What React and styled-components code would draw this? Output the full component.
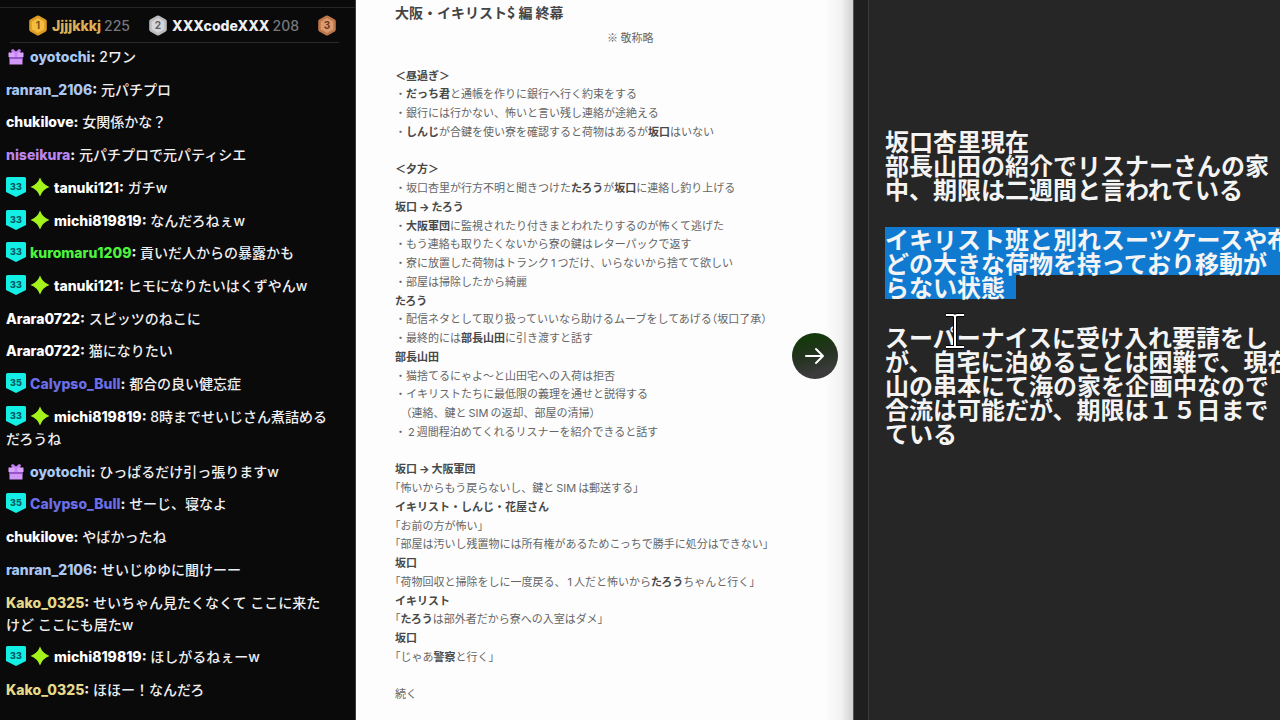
import styled, {createGlobalStyle} from 'styled-components';

const GlobalStyle = createGlobalStyle`
  *, *::before, *::after {
    box-sizing: border-box;
  }

  html, body {
    height: 100%;
    margin: 0;
    padding: 0;
    overflow: hidden;
    background-color: #262626;
  }

  p, h1, ul {
    margin: 0;
    padding: 0;
  }
`;

const Screen = styled.div`
  display: grid;
  grid-template-columns: 356fr 497fr 427fr;
  grid-template-rows: minmax(0, 1fr);
  height: 100vh;
`;

/* chat */

const Chat = styled.section`
  display: flex;
  flex-direction: column;
  min-width: 0;
  padding-top: 7px;
  border-right: 1px solid #3c3c3e;
  background-color: #0a0a0b;
  color: #efeff1;
  font-family: 'Inter', 'Noto Sans CJK JP', sans-serif;
  font-size: 14px;
  line-height: 22px;
`;

const Leaderboard = styled.ul`
  display: flex;
  align-items: center;
  gap: 18px;
  height: 36px;
  padding-left: 28px;
  border-top: 1px solid #26262a;
  list-style: none;
`;

const Leader = styled.li`
  display: flex;
  align-items: center;
  gap: 4px;
  color: ${({$color}) => $color};
  font-weight: 800;
`;

const Score = styled.span`
  color: #77777c;
  font-weight: 500;
`;

const Divider = styled.hr`
  flex: none;
  width: auto;
  height: 1px;
  margin: -1px 16px 0 10px;
  border: 0;
  background-color: #2a2a2d;
`;

const Messages = styled.ul`
  flex: 1;
  display: flex;
  flex-direction: column;
  justify-content: space-between;
  padding: 3px 24px 19px 6px;
  list-style: none;
`;

const Message = styled.li`
  font-weight: 500;

  svg {
    vertical-align: -4px;
    margin-right: 4px;
  }
`;

const Name = styled.span`
  color: ${({$color}) => $color};
  font-weight: 800;
`;

const Colon = styled.span`
  font-weight: 800;
`;

/* document */

const Page = styled.article`
  position: relative;
  display: flex;
  flex-direction: column;
  min-width: 0;
  padding: 0 0 17px 39px;
  background: linear-gradient(to left, #d2d2d2, #f2f2f2 12px, #fdfdfd 28px, #fdfdfd);
  color: #666666;
  font-family: 'Noto Sans CJK JP', sans-serif;
  font-size: 11px;
  white-space: pre;
  text-spacing-trim: trim-start;
`;

const Title = styled.h1`
  height: 28px;
  color: #444444;
  font-size: 14px;
  font-weight: 700;
  line-height: 25px;
`;

const Lines = styled.div`
  flex: 1;
  display: grid;
  grid-auto-rows: minmax(0, 1fr);
  line-height: 18px;

  b {
    color: #484848;
    font-weight: 700;
  }
`;

const Line = styled.p`
  color: ${({$head}) => ($head ? '#484848' : 'inherit')};
  font-weight: ${({$head}) => ($head ? 700 : 400)};
`;

const Note = styled.p`
  padding-left: 212px;
`;

const Half = styled.span`
  font-feature-settings: 'halt';
`;

const Latin = styled.span`
  padding: 0 2px;
  font-family: 'Inter', sans-serif;
  line-height: 1;
`;

const NextButton = styled.button`
  position: absolute;
  top: 50%;
  right: 15px;
  display: flex;
  align-items: center;
  justify-content: center;
  width: 46px;
  height: 46px;
  margin-top: -27px;
  padding: 0;
  border: 0;
  border-radius: 50%;
  background: linear-gradient(165deg, #16380d 20%, #263322 50%, #3b3b3b 80%);
`;

/* memo */

const Memo = styled.section`
  display: flex;
  min-width: 0;
  overflow: hidden;
  background-color: #262626;
`;

const Gutter = styled.div`
  flex: none;
  width: 16px;
  border-left: 1px solid #555555;
  border-right: 1px solid #3a3a3a;
  background-color: #1f1f1f;
`;

const MemoBody = styled.div`
  position: relative;
  display: flex;
  flex-direction: column;
  gap: 26px;
  min-width: 0;
  padding: 129px 0 0 16px;
  color: #f4f4f4;
  font-family: 'Noto Sans CJK JP', sans-serif;
  font-size: 24px;
  font-weight: 700;
  line-height: 24px;
  white-space: pre;
`;

const Selected = styled.mark`
  display: block;
  width: ${({$short}) => ($short ? '131px' : 'auto')};
  background-color: #0f7ad0;
  color: inherit;
`;

const Caret = styled.svg`
  position: absolute;
  top: 312px;
  left: 76px;
`;

function Medal({place, fill, edge, ink}) {
  return (
    <svg width="20" height="21" viewBox="0 0 19 21">
      <path
        d="M8.3.8a2.4 2.4 0 0 1 2.4 0l6.6 3.8a2 2 0 0 1 1 1.8v8.2a2 2 0 0 1-1 1.8l-6.6 3.8a2.4 2.4 0 0 1-2.4 0l-6.6-3.8a2 2 0 0 1-1-1.8V6.400a2 2 0 0 1 1-1.800z"
        fill={edge}
      />
      <path d="M9.500 3l6.300 3.700v7.600L9.500 18l-6.300-3.700V6.700z" fill={fill} />
      <text x="9.500" y="14" textAnchor="middle" fontSize="10" fontWeight="700" fill={ink}>
        {place}
      </text>
    </svg>
  );
}

function Gift() {
  return (
    <svg width="20" height="18" viewBox="0 0 20 18">
      <path d="M5 2l2-1 3 2.500L13 1l2 1-1 3H6z" fill="#c07cf0" />
      <path d="M2.500 4.500h15V9h-15z" fill="#d9a2fb" />
      <path d="M3.500 9h13v7.500h-13z" fill="#d096f8" />
      <path d="M3.500 9h13v2h-13z" fill="#9455c8" />
      <path d="M8.500 4.500h3V9h-3z" fill="#c585f2" />
    </svg>
  );
}

function Level({value}) {
  return (
    <svg width="20" height="20" viewBox="0 0 20 20">
      <path d="M1.500 0h17A1.500 1.500 0 0 1 20 1.500V15l-10 5L0 15V1.500A1.500 1.500 0 0 1 1.500 0z" fill="#14efe6" />
      <text x="10" y="12.500" textAnchor="middle" fontSize="9" fontWeight="800" fill="#075a5c">
        {value}
      </text>
    </svg>
  );
}

function Spark() {
  return (
    <svg width="20" height="20" viewBox="0 0 20 20">
      <path d="M10 .5Q12.500 7.500 19.500 10Q12.500 12.500 10 19.500Q7.500 12.500 .5 10Q7.500 7.500 10 .5z" fill="#a4f41c" />
    </svg>
  );
}

const WHITE = '#ffffff';
const BLUE = '#a9c8f5';
const INDIGO = '#6b6ee6';
const YELLOW = '#e6d98a';

const messages = [
  {gift: true, name: 'oyotochi', color: BLUE, text: '2ワン'},
  {name: 'ranran_2106', color: BLUE, text: '元パチプロ'},
  {name: 'chukilove', color: WHITE, text: '女関係かな？'},
  {name: 'niseikura', color: '#bb86ee', text: '元パチプロで元パティシエ'},
  {level: 33, spark: true, name: 'tanuki121', color: WHITE, text: 'ガチw'},
  {level: 33, spark: true, name: 'michi819819', color: WHITE, text: 'なんだろねぇw'},
  {level: 33, name: 'kuromaru1209', color: '#4cf53c', text: '貢いだ人からの暴露かも'},
  {level: 33, spark: true, name: 'tanuki121', color: WHITE, text: 'ヒモになりたいはくずやんw'},
  {name: 'Arara0722', color: WHITE, text: 'スピッツのねこに'},
  {name: 'Arara0722', color: WHITE, text: '猫になりたい'},
  {level: 35, name: 'Calypso_Bull', color: INDIGO, text: '都合の良い健忘症'},
  {level: 33, spark: true, name: 'michi819819', color: WHITE, text: '8時までせいじさん煮詰めるだろうね'},
  {gift: true, name: 'oyotochi', color: BLUE, text: 'ひっぱるだけ引っ張りますw'},
  {level: 35, name: 'Calypso_Bull', color: INDIGO, text: 'せーじ、寝なよ'},
  {name: 'chukilove', color: WHITE, text: 'やばかったね'},
  {name: 'ranran_2106', color: BLUE, text: 'せいじゆゆに聞けーー'},
  {name: 'Kako_0325', color: YELLOW, text: 'せいちゃん見たくなくて ここに来たけど ここにも居たw'},
  {level: 33, spark: true, name: 'michi819819', color: WHITE, text: 'ほしがるねぇーw'},
  {name: 'Kako_0325', color: YELLOW, text: 'ほほー！なんだろ'},
];

function App() {
  return (
    <>
      <GlobalStyle />
      <Screen>
        <Chat>
          <Leaderboard>
            <Leader $color="#dfae55">
              <Medal place={1} fill="#f4bd3f" edge="#dc9a24" ink="#7c5210" />
              <span>
                Jjjjkkkj <Score>225</Score>
              </span>
            </Leader>
            <Leader $color="#efeff1">
              <Medal place={2} fill="#d6d6d8" edge="#bcbcc0" ink="#626266" />
              <span>
                XXXcodeXXX <Score>208</Score>
              </span>
            </Leader>
            <Leader $color="#d08a5c">
              <Medal place={3} fill="#dc9a70" edge="#bd7748" ink="#6b3a1c" />
            </Leader>
          </Leaderboard>
          <Divider />
          <Messages>
            {messages.map((m, i) => (
              <Message key={i}>
                {m.gift && <Gift />}
                {m.level && <Level value={m.level} />}
                {m.spark && <Spark />}
                <Name $color={m.color}>{m.name}</Name>
                <Colon>:</Colon> {m.text}
              </Message>
            ))}
          </Messages>
        </Chat>

        <Page>
          <Title>大阪・イキリスト$ 編 終幕</Title>
          <Lines>
            <Note>※ 敬称略</Note>
            <Line />
            <Line $head>＜昼過ぎ＞</Line>
            <Line>・<b>だっち君</b>と通帳を作りに銀行へ行く約束をする</Line>
            <Line>・銀行には行かない、怖いと言い残し連絡が途絶える</Line>
            <Line>・<b>しんじ</b>が合鍵を使い寮を確認すると荷物はあるが<b>坂口</b>はいない</Line>
            <Line />
            <Line $head>＜夕方＞</Line>
            <Line>・坂口杏里が行方不明と聞きつけた<b>たろう</b>が<b>坂口</b>に連絡し釣り上げる</Line>
            <Line $head>坂口<Latin>→</Latin>たろう</Line>
            <Line>・<b>大阪軍団</b>に監視されたり付きまとわれたりするのが怖くて逃げた</Line>
            <Line>・もう連絡も取りたくないから寮の鍵はレターパックで返す</Line>
            <Line>・寮に放置した荷物はトランク<Latin>1</Latin>つだけ、いらないから捨てて欲しい</Line>
            <Line>・部屋は掃除したから綺麗</Line>
            <Line $head>たろう</Line>
            <Line>・配信ネタとして取り扱っていいなら助けるムーブをしてあげる<Half>（</Half>坂口了承）</Line>
            <Line>・最終的には<b>部長山田</b>に引き渡すと話す</Line>
            <Line $head>部長山田</Line>
            <Line>・猫捨てるにゃよ〜と山田宅への入荷は拒否</Line>
            <Line>・イキリストたちに最低限の義理を通せと説得する</Line>
            <Line>　<Half>（</Half>連絡、鍵と<Latin>SIM</Latin>の返却、部屋の清掃）</Line>
            <Line>・<Latin>2</Latin>週間程泊めてくれるリスナーを紹介できると話す</Line>
            <Line />
            <Line $head>坂口<Latin>→</Latin>大阪軍団</Line>
            <Line>「怖いからもう戻らないし、鍵と<Latin>SIM</Latin>は郵送する」</Line>
            <Line $head>イキリスト・しんじ・花屋さん</Line>
            <Line>「お前の方が怖い」</Line>
            <Line>「部屋は汚いし残置物には所有権があるためこっちで勝手に処分はできない」</Line>
            <Line $head>坂口</Line>
            <Line>「荷物回収と掃除をしに一度戻る、<Latin>1</Latin>人だと怖いから<b>たろう</b>ちゃんと行く」</Line>
            <Line $head>イキリスト</Line>
            <Line>「<b>たろう</b>は部外者だから寮への入室はダメ」</Line>
            <Line $head>坂口</Line>
            <Line>「じゃあ<b>警察</b>と行く」</Line>
            <Line />
            <Line>続く</Line>
          </Lines>
          <NextButton aria-label="次へ">
            <svg width="20" height="18" viewBox="0 0 20 18" fill="none" stroke="#ffffff" strokeWidth="2" strokeLinecap="round" strokeLinejoin="round">
              <path d="M1 9h17M11 2l7 7-7 7" />
            </svg>
          </NextButton>
        </Page>

        <Memo>
          <Gutter />
          <MemoBody>
            <p>{'坂口杏里現在\n部長山田の紹介でリスナーさんの家\n中、期限は二週間と言われている'}</p>
            <p>
              <Selected>イキリスト班と別れスーツケースや布</Selected>
              <Selected>どの大きな荷物を持っており移動が</Selected>
              <Selected $short>らない状態</Selected>
            </p>
            <p>{'スーパーナイスに受け入れ要請をし\nが、自宅に泊めることは困難で、現在\n山の串本にて海の家を企画中なので\n合流は可能だが、期限は１５日まで\nている'}</p>
            <Caret width="20" height="38" viewBox="0 0 20 38" fill="none">
              <path d="M1 3h7l2 2 2-2h7M10 5v28M1 35h18" stroke="#000000" strokeWidth="4" />
              <path d="M1 3h7l2 1 2-1h7M10 4v31M1 35h18" stroke="#ffffff" strokeWidth="2" />
            </Caret>
          </MemoBody>
        </Memo>
      </Screen>
    </>
  );
}

export default App;
